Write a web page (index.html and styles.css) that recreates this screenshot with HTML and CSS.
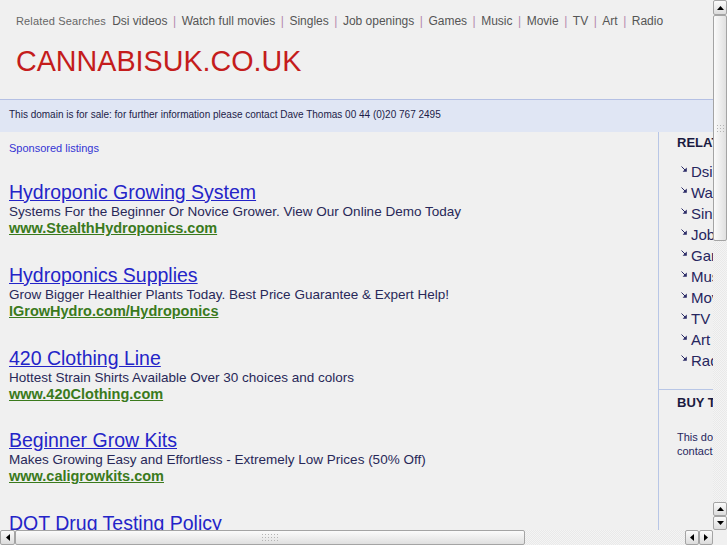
FILE: index.html
```html
<!DOCTYPE html>
<html>
  <head>
    <meta name="viewport" content="width=device-width, initial-scale=1.0">
    <title>cannabisuk.co.uk</title>
    <link rel="stylesheet" href="styles.css">
  </head>
  <body>
    <div class="window">
      <div class="window-body">
        <div class="viewport">
          <div class="page">
            <div class="header">
              <div class="related">
                <span class="related-label">Related Searches</span>
                <a href="#">Dsi videos</a><span class="sep">|</span><a href="#">Watch full movies</a><span class="sep">|</span><a href="#">Singles</a><span class="sep">|</span><a href="#">Job openings</a><span class="sep">|</span><a href="#">Games</a><span class="sep">|</span><a href="#">Music</a><span class="sep">|</span><a href="#">Movie</a><span class="sep">|</span><a href="#">TV</a><span class="sep">|</span><a href="#">Art</a><span class="sep">|</span><a href="#">Radio</a>
              </div>
              <h1 class="domain">CANNABISUK.CO.UK</h1>
            </div>

            <div class="sale-bar">This domain is for sale: for further information please contact Dave Thomas 00 44 (0)20 767 2495</div>

            <div class="content">
              <div class="listings">
                <div class="sponsored">Sponsored listings</div>

                <div class="listing">
                  <div class="listing-title"><a href="#">Hydroponic Growing System</a></div>
                  <div class="listing-desc">Systems For the Beginner Or Novice Grower. View Our Online Demo Today</div>
                  <div class="listing-url"><a href="#">www.StealthHydroponics.com</a></div>
                </div>

                <div class="listing">
                  <div class="listing-title"><a href="#">Hydroponics Supplies</a></div>
                  <div class="listing-desc">Grow Bigger Healthier Plants Today. Best Price Guarantee &amp; Expert Help!</div>
                  <div class="listing-url"><a href="#">IGrowHydro.com/Hydroponics</a></div>
                </div>

                <div class="listing">
                  <div class="listing-title"><a href="#">420 Clothing Line</a></div>
                  <div class="listing-desc">Hottest Strain Shirts Available Over 30 choices and colors</div>
                  <div class="listing-url"><a href="#">www.420Clothing.com</a></div>
                </div>

                <div class="listing">
                  <div class="listing-title"><a href="#">Beginner Grow Kits</a></div>
                  <div class="listing-desc">Makes Growing Easy and Effortless - Extremely Low Prices (50% Off)</div>
                  <div class="listing-url"><a href="#">www.caligrowkits.com</a></div>
                </div>

                <div class="listing">
                  <div class="listing-title"><a href="#">DOT Drug Testing Policy</a></div>
                  <div class="listing-desc">Complete DOT Drug Testing Programs For Employers. Get Compliant Today</div>
                  <div class="listing-url"><a href="#">www.DrugTestingPolicy.com</a></div>
                </div>
              </div>

              <div class="sidebar">
                <div class="side-block">
                  <h2>RELATED SEARCHES</h2>
                  <ul class="side-links">
                    <li><svg width="6" height="6" viewBox="0 0 6 6"><path d="M0.5 0.5 L4.5 4.5" stroke="#2a2a66" stroke-width="1"/><path d="M5.8 1.6 V5.8 H1.6 Z" fill="#2a2a66"/></svg><a href="#">Dsi videos</a></li>
                    <li><svg width="6" height="6" viewBox="0 0 6 6"><path d="M0.5 0.5 L4.5 4.5" stroke="#2a2a66" stroke-width="1"/><path d="M5.8 1.6 V5.8 H1.6 Z" fill="#2a2a66"/></svg><a href="#">Watch full movies</a></li>
                    <li><svg width="6" height="6" viewBox="0 0 6 6"><path d="M0.5 0.5 L4.5 4.5" stroke="#2a2a66" stroke-width="1"/><path d="M5.8 1.6 V5.8 H1.6 Z" fill="#2a2a66"/></svg><a href="#">Singles</a></li>
                    <li><svg width="6" height="6" viewBox="0 0 6 6"><path d="M0.5 0.5 L4.5 4.5" stroke="#2a2a66" stroke-width="1"/><path d="M5.8 1.6 V5.8 H1.6 Z" fill="#2a2a66"/></svg><a href="#">Job openings</a></li>
                    <li><svg width="6" height="6" viewBox="0 0 6 6"><path d="M0.5 0.5 L4.5 4.5" stroke="#2a2a66" stroke-width="1"/><path d="M5.8 1.6 V5.8 H1.6 Z" fill="#2a2a66"/></svg><a href="#">Games</a></li>
                    <li><svg width="6" height="6" viewBox="0 0 6 6"><path d="M0.5 0.5 L4.5 4.5" stroke="#2a2a66" stroke-width="1"/><path d="M5.8 1.6 V5.8 H1.6 Z" fill="#2a2a66"/></svg><a href="#">Music</a></li>
                    <li><svg width="6" height="6" viewBox="0 0 6 6"><path d="M0.5 0.5 L4.5 4.5" stroke="#2a2a66" stroke-width="1"/><path d="M5.8 1.6 V5.8 H1.6 Z" fill="#2a2a66"/></svg><a href="#">Movie</a></li>
                    <li><svg width="6" height="6" viewBox="0 0 6 6"><path d="M0.5 0.5 L4.5 4.5" stroke="#2a2a66" stroke-width="1"/><path d="M5.8 1.6 V5.8 H1.6 Z" fill="#2a2a66"/></svg><a href="#">TV</a></li>
                    <li><svg width="6" height="6" viewBox="0 0 6 6"><path d="M0.5 0.5 L4.5 4.5" stroke="#2a2a66" stroke-width="1"/><path d="M5.8 1.6 V5.8 H1.6 Z" fill="#2a2a66"/></svg><a href="#">Art</a></li>
                    <li><svg width="6" height="6" viewBox="0 0 6 6"><path d="M0.5 0.5 L4.5 4.5" stroke="#2a2a66" stroke-width="1"/><path d="M5.8 1.6 V5.8 H1.6 Z" fill="#2a2a66"/></svg><a href="#">Radio</a></li>
                  </ul>
                </div>
                <div class="side-block side-buy">
                  <h2>BUY THIS DOMAIN</h2>
                  <p>This domain is for sale: for further information please contact Dave Thomas 00 44 (0)20 767 2495</p>
                </div>
              </div>
            </div>
          </div>
        </div>

        <div class="vscroll">
          <div class="sb-btn"><svg width="7" height="4" viewBox="0 0 7 4"><path d="M3.5 0 L7 4 H0 Z" fill="#000"/></svg></div>
          <div class="sb-thumb sb-thumb-v"><span class="grip"></span></div>
          <div class="sb-track"></div>
          <div class="sb-btn"><svg width="7" height="4" viewBox="0 0 7 4"><path d="M3.5 0 L7 4 H0 Z" fill="#000"/></svg></div>
          <div class="sb-btn"><svg width="7" height="4" viewBox="0 0 7 4"><path d="M0 0 H7 L3.5 4 Z" fill="#000"/></svg></div>
        </div>
      </div>

      <div class="hscroll">
        <div class="sb-btn"><svg width="4" height="7" viewBox="0 0 4 7"><path d="M0 3.5 L4 0 V7 Z" fill="#000"/></svg></div>
        <div class="sb-thumb sb-thumb-h"><span class="grip"></span></div>
        <div class="sb-track"></div>
        <div class="sb-btn"><svg width="4" height="7" viewBox="0 0 4 7"><path d="M0 3.5 L4 0 V7 Z" fill="#000"/></svg></div>
        <div class="sb-btn"><svg width="4" height="7" viewBox="0 0 4 7"><path d="M4 3.5 L0 0 V7 Z" fill="#000"/></svg></div>
        <div class="sb-corner"></div>
      </div>
    </div>
  </body>
</html>
```

FILE: styles.css
```css
body {
  margin: 0;
  overflow: hidden;
  background-color: #f0f0f0;
  font-family: "Liberation Sans", Arial, sans-serif;
}

.window {
  display: flex;
  flex-direction: column;
  width: 727px;
  height: 545px;
}

.window-body {
  display: flex;
  flex: 1;
  min-height: 0;
}

.viewport {
  flex: 1;
  overflow: hidden;
  background-color: #f0f0f0;
}

.page {
  width: 950px;
}

/* header */
.header {
  height: 99px;
  padding: 13px 0 0 16px;
  box-sizing: border-box;
}

.related {
  font-size: 12px;
  line-height: 16px;
  color: #555;
  white-space: nowrap;
}

.related-label {
  font-size: 11px;
  letter-spacing: 0.15px;
  color: #666;
  margin-right: 3px;
}

.related a {
  color: #555;
  text-decoration: none;
}

.sep {
  color: #b48aae;
  margin: 0 5.5px;
}

.domain {
  margin: 15px 0 0;
  font-size: 28.7px;
  font-weight: normal;
  line-height: 34px;
  color: #c41c1c;
}

.sale-bar {
  height: 33px;
  box-sizing: border-box;
  padding: 8px 0 0 9px;
  border-top: 1px solid #b4c0e4;
  background-color: #e0e6f4;
  font-size: 10px;
  line-height: 14px;
  color: #1c1c48;
  white-space: nowrap;
}

/* main column */
.content {
  display: flex;
}

.listings {
  width: 659px;
  height: 1010px;
  box-sizing: border-box;
  padding: 9px 0 0 9px;
  border-right: 1px solid #b8c6e6;
}

.sponsored {
  margin-bottom: 27px;
  font-size: 11px;
  line-height: 14px;
  color: #3434d4;
}

.listing {
  margin-bottom: 27.75px;
  white-space: nowrap;
}

.listing-title {
  font-size: 19.5px;
  line-height: 21px;
}

.listing-title a {
  color: #2424c8;
}

.listing-desc {
  font-size: 13.5px;
  line-height: 17px;
  color: #282858;
}

.listing-url {
  font-size: 14.5px;
  font-weight: bold;
  line-height: 17px;
}

.listing-url a {
  color: #3a7a1c;
}

/* sidebar */
.sidebar {
  flex: 1;
}

.side-block {
  padding: 3px 10px 18px 18px;
}

.side-block h2 {
  margin: 0;
  font-size: 13px;
  line-height: 16px;
  color: #1a1a40;
  white-space: nowrap;
}

.side-links {
  list-style: none;
  margin: 10px 0 0;
  padding: 0 0 0 4px;
}

.side-links li {
  display: flex;
  align-items: center;
  gap: 4px;
  font-size: 15px;
  line-height: 21px;
  white-space: nowrap;
}

.side-links svg {
  margin-top: -5px;
}

.side-links a {
  color: #26265e;
  text-decoration: none;
}

.side-buy {
  padding-top: 5px;
  border-top: 1px solid #b8c6e6;
}

.side-buy p {
  margin: 19px 0 0;
  font-size: 11px;
  line-height: 14px;
  color: #26265e;
}

/* scrollbars */
.vscroll {
  display: flex;
  flex-direction: column;
  width: 14px;
}

.hscroll {
  display: flex;
  height: 15px;
}

.sb-btn {
  display: flex;
  align-items: center;
  justify-content: center;
  flex: none;
  box-sizing: border-box;
  border: 1px solid #a4a4a4;
  border-radius: 2px;
  background: linear-gradient(#fbfbfb, #dcdcdc);
}

.vscroll .sb-btn {
  width: 14px;
  height: 14px;
}

.vscroll .sb-btn:first-child {
  height: 15px;
}

.hscroll .sb-btn {
  width: 14px;
  height: 15px;
}

.hscroll .sb-btn:first-child {
  width: 15px;
}

.sb-thumb {
  display: flex;
  align-items: center;
  justify-content: center;
  flex: none;
  box-sizing: border-box;
  border: 1px solid #a4a4a4;
  border-radius: 2px;
}

.sb-thumb-v {
  height: 226px;
  background: linear-gradient(to right, #fbfbfb, #e0e0e0);
}

.sb-thumb-h {
  width: 510px;
  background: linear-gradient(#fbfbfb, #e0e0e0);
}

.grip {
  width: 9px;
  height: 9px;
  background: radial-gradient(circle, #b4b4b4 0.7px, transparent 1px) 0 0 / 3px 3px;
}

.sb-thumb-h .grip {
  width: 18px;
}

.sb-track {
  flex: 1;
  background: repeating-conic-gradient(#f4f4f4 0 25%, #e9e9e9 0 50%) 0 0 / 2px 2px;
}

.sb-corner {
  width: 14px;
  flex: none;
  background-color: #f0f0f0;
}
```
